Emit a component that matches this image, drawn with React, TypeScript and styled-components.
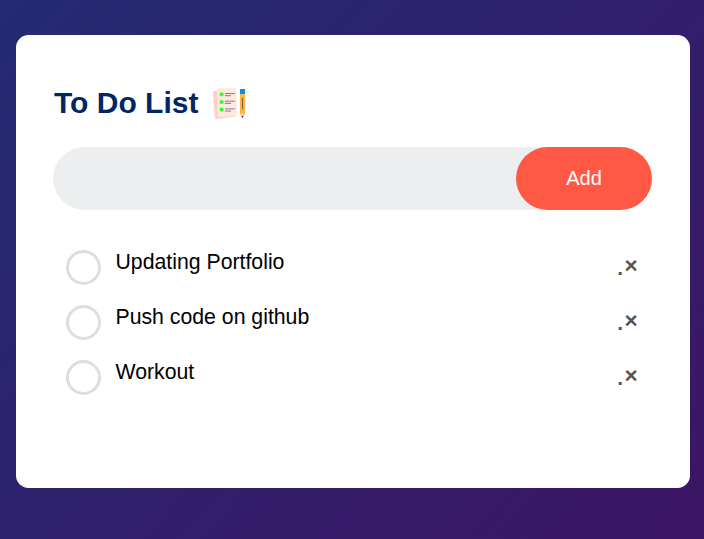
import React, { useState } from "react";
import styled, { createGlobalStyle } from "styled-components";

const GlobalStyle = createGlobalStyle`
  * { box-sizing: border-box; margin: 0; padding: 0; }
  body { font-family: "Liberation Sans", Arial, sans-serif; }
`;

const Page = styled.main`
  min-height: 100vh;
  padding: 35px 14px 51px 16px;
  background: linear-gradient(135deg, #232b72, #3d1565);
`;

const Card = styled.section`
  height: 453px;
  padding: 49px 38px 0 37px;
  border-radius: 12.5px;
  background: #fff;
`;

const Heading = styled.h2`
  display: flex;
  align-items: center;
  height: 37px;
  padding-left: 1px;
  color: #002765;
  font-size: 30px;
  line-height: 35px;
`;

const ListIcon = styled.svg`
  width: 37px;
  height: 37px;
  margin-left: 12px;
`;

const EntryForm = styled.form`
  display: flex;
  height: 63px;
  margin-top: 26px;
  border-radius: 38px;
  background: #edeef0;
`;

const TaskInput = styled.input`
  flex: 1;
  min-width: 0;
  padding: 0 25px;
  border: none;
  outline: none;
  background: transparent;
  font: 18px "Liberation Sans", Arial, sans-serif;
`;

const AddButton = styled.button`
  width: 136px;
  border: none;
  border-radius: 50px;
  background: #ff5945;
  color: #fff;
  font: 20px "Liberation Sans", Arial, sans-serif;
  cursor: pointer;
`;

const TaskList = styled.ul`
  margin-top: 25px;
  list-style: none;
`;

const TaskRow = styled.li`
  display: flex;
  height: 55px;
  padding: 15px 13px 0;
`;

const Check = styled.button<{ $done: boolean }>`
  width: 35px;
  height: 35px;
  border: 3px solid ${(p) => (p.$done ? "#ff5945" : "#dedede")};
  border-radius: 50%;
  background: ${(p) => (p.$done ? "#ff5945" : "#fff")};
  cursor: pointer;
`;

const TaskText = styled.span<{ $done: boolean }>`
  flex: 1;
  padding-left: 14.5px;
  color: #000;
  font-size: 21.25px;
  line-height: 24px;
  text-decoration: ${(p) => (p.$done ? "line-through" : "none")};
`;

const RemoveButton = styled.button`
  display: flex;
  width: 24px;
  height: 32px;
  border: none;
  background: transparent;
  color: #555;
  font: bold 22.5px/32px "Liberation Sans", Arial, sans-serif;
  cursor: pointer;
`;

const Dot = styled.span`
  width: 9.5px;
  padding-left: 1px;
  font-size: 21px;
  line-height: 35px;
`;

function ChecklistIcon() {
  return (
    <ListIcon viewBox="0 0 37 37" aria-hidden="true">
      <path d="M3 8 Q3 7 4 7 L22 6 L26 32.5 L6 35 Q5 35 5 34 Z" fill="#ffcfc5" />
      <path d="M8 4.3 L24.5 4 Q26 4 26.2 6 L27.5 30 Q27.5 32 25.5 32 L9.5 33 Q8 33 7.8 31 L7 6 Q7 4.5 8 4.3 Z" fill="#ffe9de" />
      {[10.3, 18, 25.7].map((y) => (
        <g key={y}>
          <circle cx="11.6" cy={y} r="2.1" fill="#3bfa32" />
          <path d={`M15 ${y - 0.8}h10M15 ${y + 1.4}h6`} stroke="#85699d" strokeWidth="0.9" />
        </g>
      ))}
      <path d="M30 9h5v21l-2.5 4-2.5-4z" fill="#ffb345" />
      <path d="M30 5h5v5h-5z" fill="#078cf4" />
      <path d="M32.5 14v11" stroke="#8b632c" strokeWidth="1.1" />
      <path d="M30 29.5h5l-2.5 4.5z" fill="#ffc9c4" />
      <path d="M31.5 32h2l-1 2z" fill="#343348" />
    </ListIcon>
  );
}

export default function App() {
  const [draft, setDraft] = useState("");
  const [tasks, setTasks] = useState([
    { id: 1, text: "Updating Portfolio", done: false },
    { id: 2, text: "Push code on github", done: false },
    { id: 3, text: "Workout", done: false },
  ]);

  const addTask = (event: React.FormEvent) => {
    event.preventDefault();
    if (!draft.trim()) return;
    setTasks([...tasks, { id: Date.now(), text: draft, done: false }]);
    setDraft("");
  };

  const toggle = (id: number) =>
    setTasks(tasks.map((t) => (t.id === id ? { ...t, done: !t.done } : t)));

  return (
    <>
      <GlobalStyle />
      <Page>
        <Card>
          <Heading>To Do List <ChecklistIcon /></Heading>
          <EntryForm onSubmit={addTask}>
            <TaskInput aria-label="New task" value={draft} onChange={(e) => setDraft(e.target.value)} />
            <AddButton>Add</AddButton>
          </EntryForm>
          <TaskList>
            {tasks.map((task) => (
              <TaskRow key={task.id}>
                <Check $done={task.done} aria-label="Toggle task" onClick={() => toggle(task.id)} />
                <TaskText $done={task.done}>{task.text}</TaskText>
                <RemoveButton aria-label="Remove task" onClick={() => setTasks(tasks.filter((t) => t.id !== task.id))}>
                  <Dot>.</Dot>×
                </RemoveButton>
              </TaskRow>
            ))}
          </TaskList>
        </Card>
      </Page>
    </>
  );
}
